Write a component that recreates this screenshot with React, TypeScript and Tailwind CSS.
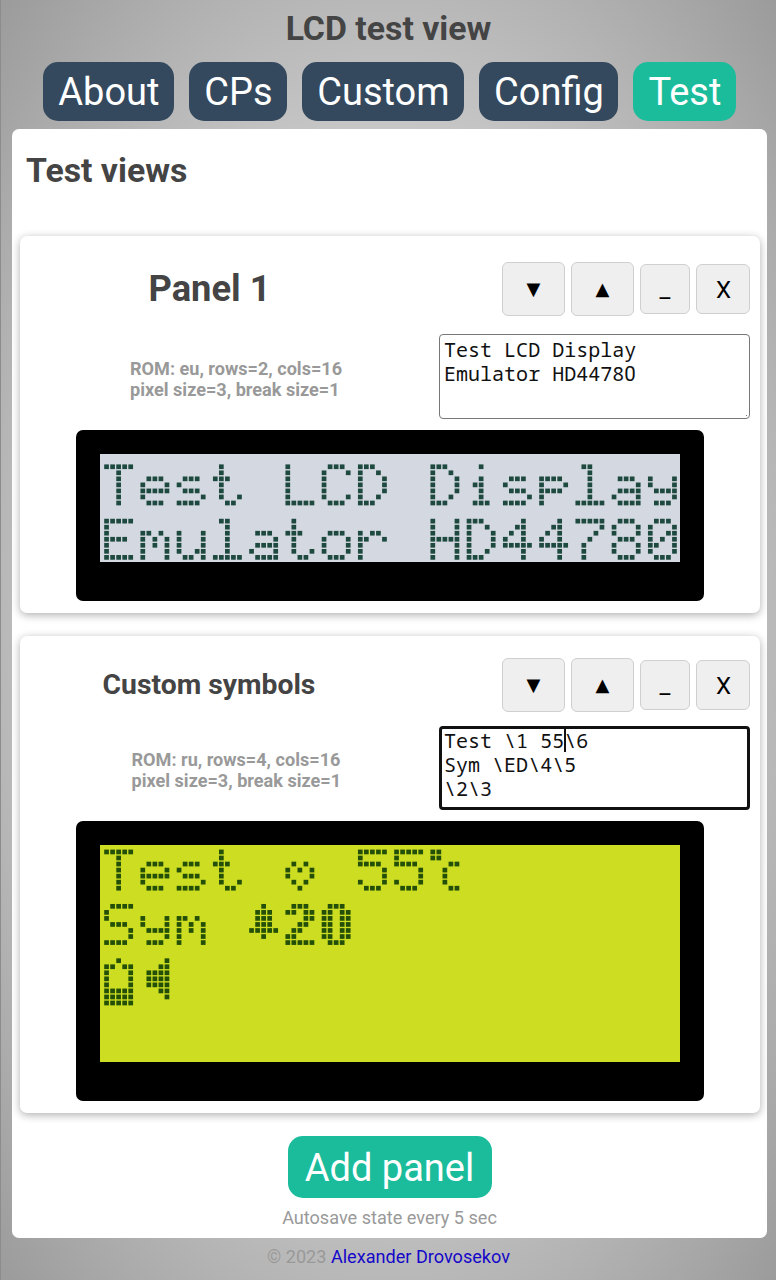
import React from "react";

const GLYPHS: Record<string, string> = {
  T: "#####/..#../..#../..#../..#../..#../..#..",
  e: "...../...../.###./#...#/#####/#..../.###.",
  s: "...../...../.###./#..../.###./....#/####.",
  t: ".#.../.#.../###../.#.../.#.../.#..#/..##.",
  L: "#..../#..../#..../#..../#..../#..../#####",
  C: ".###./#...#/#..../#..../#..../#...#/.###.",
  D: "###../#..#./#...#/#...#/#...#/#..#./###..",
  i: "..#../...../..#../.##../..#../..#../.###.",
  p: "...../...../####./#...#/####./#..../#....",
  l: ".##../..#../..#../..#../..#../..#../#####",
  a: "...../...../.###./....#/.####/#...#/.####",
  y: "...../...../#...#/#...#/.####/....#/.###.",
  E: "#####/#..../#..../####./#..../#..../#####",
  m: "...../...../##.#./#.#.#/#.#.#/#...#/#...#",
  u: "...../...../#...#/#...#/#...#/#..##/.##.#",
  o: "...../...../.###./#...#/#...#/#...#/.###.",
  r: "...../...../#.##./##..#/#..../#..../#....",
  H: "#...#/#...#/#...#/#####/#...#/#...#/#...#",
  "4": "...#./..##./.#.#./#..#./#####/...#./...#.",
  "7": "#####/....#/...#./..#../.#.../.#.../.#...",
  "8": ".###./#...#/#...#/.###./#...#/#...#/.###.",
  "0": ".###./#...#/#..##/#.#.#/##..#/#...#/.###.",
  "5": "#####/#..../####./....#/....#/#...#/.###.",
  S: ".####/#..../#..../.###./....#/....#/####.",
  "♥": "...../...../.#.#./#.#.#/#...#/.#.#./..#..",
  "℃": "##.../##.../...##/..#../..#../..#../...##",
  "♪": "..#../.###./.###./.###./#####/..#../.....",
  "②": ".###./##.##/...##/..##./.##../##.../#####",
  "⓪": ".###./##.##/##.##/##.##/##.##/##.##/.###.",
  "▯": "..#../##.##/#...#/#...#/#...#/#####/#####/#####",
  "◀": "....#/...##/.####/.####/.####/...##/....#",
};

const PITCH = 580 / 96;

function Lcd({ lines, rows, offset, screen, ink }: { lines: string[]; rows: number; offset: number; screen: string; ink: string }) {
  const dots: React.ReactNode[] = [];
  lines.forEach((line, r) =>
    Array.from(line).forEach((ch, c) =>
      (GLYPHS[ch] ?? "").split("/").forEach((bits, y) =>
        Array.from(bits).forEach((bit, x) => {
          if (bit !== "#") return;
          dots.push(
            <rect key={`${r}-${c}-${y}-${x}`} x={4.2 + (c * 6 + x) * PITCH} y={offset + (r * 9 + y) * PITCH} width={4.7} height={4.7} />
          );
        })
      )
    )
  );
  const height = rows * 9 * PITCH;
  return (
    <div className="mx-auto w-[628px] rounded-[7px] bg-black px-6 pt-[23.5px] pb-[39px]">
      <svg width={580} height={height} viewBox={`0 0 580 ${height}`} className={`block ${screen} ${ink}`} fill="currentColor">
        {dots}
      </svg>
    </div>
  );
}

const TABS = [
  { label: "About", style: "w-[131px] bg-[#34495e]" },
  { label: "CPs", style: "w-[98px] bg-[#34495e]" },
  { label: "Custom", style: "w-[162px] bg-[#34495e]" },
  { label: "Config", style: "w-[139px] bg-[#34495e]" },
  { label: "Test", style: "w-[103px] bg-[#1abc9c]" },
];

const BTN = "flex items-center justify-center rounded-[6px] border-[1.5px] border-[#cfcfcf] bg-[#efefef] text-black";

function Controls() {
  return (
    <div className="flex items-center gap-[6px]">
      <button className={`${BTN} h-[54px] w-[63px] pb-[2px] font-['DejaVu_Sans'] text-[18px]`}>▼</button>
      <button className={`${BTN} h-[54px] w-[63px] pb-[2px] font-['DejaVu_Sans'] text-[18px]`}>▲</button>
      <button className={`${BTN} h-[50px] w-[50px] text-[24px]`}>_</button>
      <button className={`${BTN} h-[50px] w-[54px] pt-px pl-px text-[24px]`}>X</button>
    </div>
  );
}

const MONO = "font-['Droid_Sans_Mono','Noto_Sans_Mono','DejaVu_Sans_Mono',monospace] text-[20.05px] leading-[24px] whitespace-pre text-[#111]";

export default function App() {
  return (
    <div className="flex h-[1280px] w-[776px] flex-col border-l border-[#8c8c8c] bg-[radial-gradient(#fff,#9b9b9b)] font-[Roboto,sans-serif] text-[#444]">
      <h1 className="mt-[7px] h-[44px] text-center text-[33.8px] leading-[44px] font-bold">LCD test view</h1>
      <nav className="mt-[10.5px] ml-[42.4px] flex gap-[15px]">
        {TABS.map((t) => (
          <a key={t.label} className={`flex h-[59.5px] items-center justify-center rounded-[15px] pt-[2px] text-[38px] text-white ${t.style}`}>
            {t.label}
          </a>
        ))}
      </nav>
      <main className="mt-2 ml-[11px] flex h-[1109px] w-[755px] flex-col rounded-[7px] bg-white px-2">
        <h2 className="mt-[20px] ml-[6px] h-[44px] text-[33.8px] leading-[44px] font-bold">Test views</h2>

        <section className="mt-[43px] h-[377px] w-[740px] rounded-[7px] bg-white shadow-[0_2px_8px_rgba(0,0,0,0.32)]">
          <div className="flex h-[106px] items-center justify-between pr-[10px]">
            <h3 className="w-[379px] text-center text-[36.3px] font-bold">Panel 1</h3>
            <Controls />
          </div>
          <div className="-mt-[8px] flex h-[96px] justify-between pr-[10px]">
            <p className="mt-[24px] ml-[110px] text-[18.1px] leading-[21px] font-bold text-[#999]">
              ROM: eu, rows=2, cols=16
              <br />
              pixel size=3, break size=1
            </p>
            <div className={`relative h-[85px] w-[311px] rounded-[4px] border-[1.5px] border-[#777] px-1 pt-[3px] ${MONO}`}>
              <div className="h-6">Test LCD Display</div>
              <div className="flex h-6">
                <span>Emulator HD4478</span>
                <span className="font-[Roboto] text-[20.5px] leading-6">0</span>
              </div>
              <i className="absolute right-[2px] bottom-[2px] size-px bg-[#777]" />
            </div>
          </div>
          <Lcd lines={["Test LCD Display", "Emulator HD44780"]} rows={2} offset={10.4} screen="bg-[#d4d9e1]" ink="text-[#1d493f]" />
        </section>

        <section className="mt-[23px] h-[477px] w-[740px] rounded-[7px] bg-white shadow-[0_2px_8px_rgba(0,0,0,0.32)]">
          <div className="flex h-[98px] items-center justify-between pr-[10px]">
            <h3 className="w-[378px] text-center text-[28.3px] font-bold">Custom symbols</h3>
            <Controls />
          </div>
          <div className="-mt-[8px] flex h-[95px] justify-between pr-[10px]">
            <p className="mt-[23px] ml-[111.5px] text-[18.1px] leading-[21px] font-bold text-[#999]">
              ROM: ru, rows=4, cols=16
              <br />
              pixel size=3, break size=1
            </p>
            <div className={`h-[84px] w-[311px] rounded-[4px] border-[3px] border-[#111] px-[2px] ${MONO}`}>
              <div className="relative h-6">
                {"Test \\1 55\\6"}
                <i className="absolute top-0 left-[120px] h-[23px] w-[1.5px] bg-[#111]" />
              </div>
              <div className="h-6">{"Sym \\ED\\4\\5"}</div>
              <div className="h-6">{"\\2\\3"}</div>
            </div>
          </div>
          <Lcd lines={["Test ♥ 55℃", "Sym ♪②⓪", "▯◀"]} rows={4} offset={4.6} screen="bg-[#ccdd22]" ink="text-[#244f08]" />
        </section>

        <button className="mx-auto mt-[23px] h-[62px] w-[204px] rounded-[15px] bg-[#1abc9c] pt-px text-[38px] leading-[62px] text-white">Add panel</button>
        <p className="mt-[9px] text-center text-[18.1px] leading-[21px] text-[#999]">Autosave state every 5 sec</p>
      </main>
      <footer className="mt-[8px] text-center text-[18.1px] leading-[21px] text-[#999]">
        © 2023 <a className="text-[#1507c9]">Alexander Drovosekov</a>
      </footer>
    </div>
  );
}
